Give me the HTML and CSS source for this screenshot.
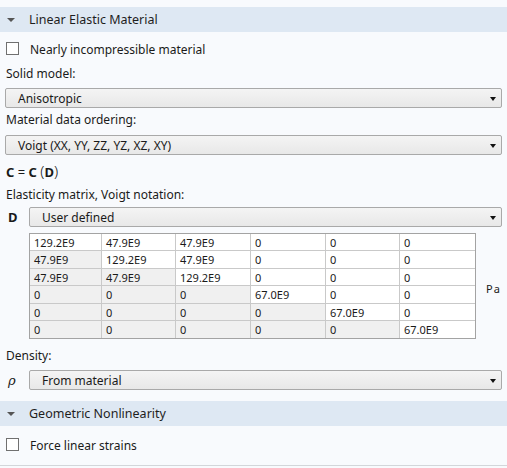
FILE: index.html
```html
<!DOCTYPE html>
<html>
<head>
<meta charset="utf-8">
<link rel="stylesheet" href="styles.css">
</head>
<body>
<div class="page">
  <div class="header header-first"><span class="tri"></span><span class="htext">Linear Elastic Material</span></div>
  <div class="check check-first"><span class="box"></span><span>Nearly incompressible material</span></div>
  <div class="label l-solid">Solid model:</div>
  <div class="select s-solid"><span>Anisotropic</span><span class="arrow"></span></div>
  <div class="label l-order">Material data ordering:</div>
  <div class="select s-order"><span>Voigt (XX, YY, ZZ, YZ, XZ, XY)</span><span class="arrow"></span></div>
  <div class="formula"><b>C</b> = <b>C</b> <span class="paren">(</span><b>D</b><span class="paren">)</span></div>
  <div class="label l-elast">Elasticity matrix, Voigt notation:</div>
  <div class="symrow r-d"><span class="sym bold">D</span><div class="select grow"><span>User defined</span><span class="arrow"></span></div></div>
  <div class="matrixrow">
    <div class="matrix">
      <div class="c">129.2E9</div><div class="c">47.9E9</div><div class="c">47.9E9</div><div class="c">0</div><div class="c">0</div><div class="c">0</div>
      <div class="c g">47.9E9</div><div class="c">129.2E9</div><div class="c">47.9E9</div><div class="c">0</div><div class="c">0</div><div class="c">0</div>
      <div class="c g">47.9E9</div><div class="c g">47.9E9</div><div class="c">129.2E9</div><div class="c">0</div><div class="c">0</div><div class="c">0</div>
      <div class="c g">0</div><div class="c g">0</div><div class="c g">0</div><div class="c">67.0E9</div><div class="c">0</div><div class="c">0</div>
      <div class="c g">0</div><div class="c g">0</div><div class="c g">0</div><div class="c g">0</div><div class="c">67.0E9</div><div class="c">0</div>
      <div class="c g">0</div><div class="c g">0</div><div class="c g">0</div><div class="c g">0</div><div class="c g">0</div><div class="c">67.0E9</div>
    </div>
    <span class="unit">Pa</span>
  </div>
  <div class="label l-dens">Density:</div>
  <div class="symrow r-rho"><span class="sym rho">ρ</span><div class="select grow"><span>From material</span><span class="arrow"></span></div></div>
  <div class="header header-second"><span class="tri"></span><span class="htext">Geometric Nonlinearity</span></div>
  <div class="check check-second"><span class="box"></span><span>Force linear strains</span></div>
</div>
</body>
</html>
```

FILE: styles.css
```css
html, body {
  margin: 0;
  padding: 0;
  background: #f8fafd;
}
body {
  font-family: "Noto Sans", "Open Sans", "DejaVu Sans", sans-serif;
  font-size: 12px;
  color: #1a1a1a;
  width: 507px;
  height: 468px;
  overflow: hidden;
}
.page {
  display: flex;
  flex-direction: column;
  padding-top: 7px;
}
.header {
  height: 25px;
  background: #dee8f3;
  display: flex;
  align-items: center;
  font-size: 12.5px;
  color: #1e1e1e;
}
.tri {
  width: 0;
  height: 0;
  border-left: 4px solid transparent;
  border-right: 4px solid transparent;
  border-top: 4px solid #555;
  margin-left: 7px;
  margin-right: 14px;
  margin-top: 1px;
}
.check {
  display: flex;
  align-items: center;
  height: 13px;
  padding-left: 6px;
}
.check span:last-child { margin-top: 2px; }
.check-first { margin-top: 10px; }
.check-second { margin-top: 12px; padding-bottom: 14px; border-bottom: 1px solid #d3d6da; }
.box {
  width: 11px;
  height: 11px;
  border: 1px solid #707070;
  background: #fff;
  margin-right: 11px;
}
.label {
  height: 16px;
  line-height: 16px;
  padding-left: 6px;
}
.l-solid { margin-top: 11px; }
.l-order { margin-top: 4px; }
.l-elast { margin-top: 8px; }
.l-dens { margin-top: 9px; }
.select {
  height: 18px;
  border: 1px solid #a9a9a9;
  border-radius: 2px;
  background: linear-gradient(#f4f4f4, #e8e8e8);
  display: flex;
  align-items: center;
  justify-content: space-between;
  padding-left: 12px;
  padding-right: 5px;
  margin-left: 5px;
  margin-right: 5px;
}
.select.grow {
  flex: 1;
  margin-left: 0;
}
.s-solid { margin-top: 6px; }
.s-order { margin-top: 7px; }
.arrow {
  width: 0;
  height: 0;
  border-left: 3.5px solid transparent;
  border-right: 3.5px solid transparent;
  border-top: 4px solid #111;
  margin-top: 2px;
}
.formula {
  margin-top: 8px;
  height: 16px;
  line-height: 16px;
  padding-left: 6px;
  font-size: 13px;
  white-space: pre;
}
.formula b { font-weight: bold; }
.paren { font-size: 15px; font-weight: 300; }
.symrow {
  display: flex;
  align-items: center;
}
.r-d { margin-top: 4px; }
.r-rho { margin-top: 6px; }
.sym {
  width: 29px;
  padding-left: 8px;
  box-sizing: border-box;
}
.bold { font-weight: bold; font-size: 13px; }
.rho { font-style: italic; font-family: "DejaVu Serif", serif; font-size: 13px; }
.matrixrow {
  display: flex;
  align-items: center;
  margin-top: 6px;
  padding-left: 29px;
}
.matrix {
  display: grid;
  grid-template-columns: 71px 73px 74px 74px 73px 75px;
  grid-template-rows: 16px 17px 16px 17px 16px 17px;
  gap: 1px;
  background: #c9c9c9;
  border: 1px solid #a3a3a3;
  font-size: 11px;
}
.c {
  background: #fff;
  padding-left: 4px;
  display: flex;
  align-items: center;
}
.c.g { background: #f0f0f0; }
.unit {
  margin-left: 10px;
  font-size: 11px;
  letter-spacing: 1px;
  margin-top: 4px;
}
.header-second { margin-top: 11px; }
```
